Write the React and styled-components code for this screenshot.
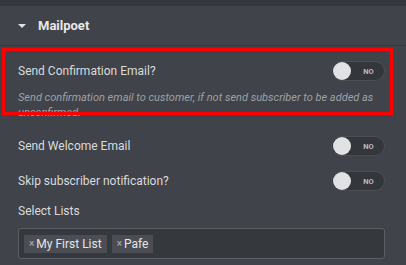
import React from 'react';
import styled, { createGlobalStyle } from 'styled-components';

const GlobalStyle = createGlobalStyle`
  html, body {
    margin: 0;
    padding: 0;
    background: #404349;
    overflow: hidden;
  }
  * { box-sizing: border-box; }
`;

const Panel = styled.div`
  width: 406px;
  height: 265px;
  background: #404349;
  font-family: Roboto, 'Liberation Sans', sans-serif;
  color: #e0e1e3;
  display: flex;
  flex-direction: column;
  overflow: hidden;
`;

const TopBand = styled.div`
  height: 6px;
  background: #34373c;
  flex-shrink: 0;
`;

const SectionHeader = styled.div`
  height: 40px;
  display: flex;
  align-items: center;
  gap: 12px;
  padding-left: 18px;
  border-bottom: 1px solid #35383d;
  flex-shrink: 0;
`;

const Caret = styled.span`
  width: 0;
  height: 0;
  border-left: 4px solid transparent;
  border-right: 4px solid transparent;
  border-top: 4px solid #e0e1e3;
  margin-top: 1px;
`;

const SectionTitle = styled.span`
  font-size: 13px;
  font-weight: 700;
  color: #e6e8ea;
`;

const Content = styled.div`
  padding: 15px 21px 0 18px;
  display: flex;
  flex-direction: column;
`;

const Control = styled.div`
  position: relative;
  margin-bottom: ${(p) => p.gap || 0}px;
`;

const Row = styled.div`
  display: flex;
  align-items: center;
  justify-content: space-between;
  height: 20px;
`;

const Label = styled.span`
  font-size: 12px;
  color: #d9dbde;
`;

const Description = styled.div`
  margin-top: 9px;
  font-size: 11px;
  line-height: 15px;
  font-style: italic;
  color: #9ea1a7;
`;

const Highlight = styled.div`
  position: absolute;
  top: -13px;
  left: -16px;
  right: -8px;
  height: 67px;
  border: 3px solid #ff0000;
  pointer-events: none;
`;

const Switch = styled.div`
  width: 54px;
  height: 20px;
  border-radius: 10px;
  background: #33363b;
  border: 1px solid #4b4e54;
  display: flex;
  align-items: center;
  padding-left: 1px;
  position: relative;
`;

const Knob = styled.span`
  width: 18px;
  height: 18px;
  border-radius: 50%;
  background: #e1e2e4;
`;

const SwitchText = styled.span`
  position: absolute;
  right: 10px;
  font-size: 7.5px;
  font-weight: 700;
  color: #b9bcc2;
  letter-spacing: 0.2px;
`;

const SelectLabel = styled.div`
  font-size: 12px;
  line-height: 15px;
  color: #d9dbde;
  margin-bottom: 9px;
`;

const TagBox = styled.div`
  height: 31px;
  border: 1px solid #5b5e63;
  border-radius: 3px;
  background: #35383d;
  display: flex;
  align-items: center;
  gap: 5px;
  padding-left: 5px;
`;

const Tag = styled.span`
  height: 18px;
  background: #4a4d53;
  display: flex;
  align-items: center;
  gap: 2px;
  padding: 0 5px 0 5px;
  font-size: 12px;
  color: #e4e6e8;
`;

const TagRemove = styled.span`
  font-size: 10px;
  color: #9a9da3;
  font-weight: 700;
`;

function Toggle() {
  return (
    <Switch>
      <Knob />
      <SwitchText>NO</SwitchText>
    </Switch>
  );
}

export default function App() {
  return (
    <>
      <GlobalStyle />
      <Panel>
        <TopBand />
        <SectionHeader>
          <Caret />
          <SectionTitle>Mailpoet</SectionTitle>
        </SectionHeader>
        <Content>
          <Control gap={16}>
            <Row>
              <Label>Send Confirmation Email?</Label>
              <Toggle />
            </Row>
            <Description>
              Send confirmation email to customer, if not send subscriber to be added as unconfirmed.
            </Description>
            <Highlight />
          </Control>
          <Control gap={15}>
            <Row>
              <Label>Send Welcome Email</Label>
              <Toggle />
            </Row>
          </Control>
          <Control gap={13}>
            <Row>
              <Label>Skip subscriber notification?</Label>
              <Toggle />
            </Row>
          </Control>
          <Control>
            <SelectLabel>Select Lists</SelectLabel>
            <TagBox>
              <Tag>
                <TagRemove>×</TagRemove>My First List
              </Tag>
              <Tag>
                <TagRemove>×</TagRemove>Pafe
              </Tag>
            </TagBox>
          </Control>
        </Content>
      </Panel>
    </>
  );
}
